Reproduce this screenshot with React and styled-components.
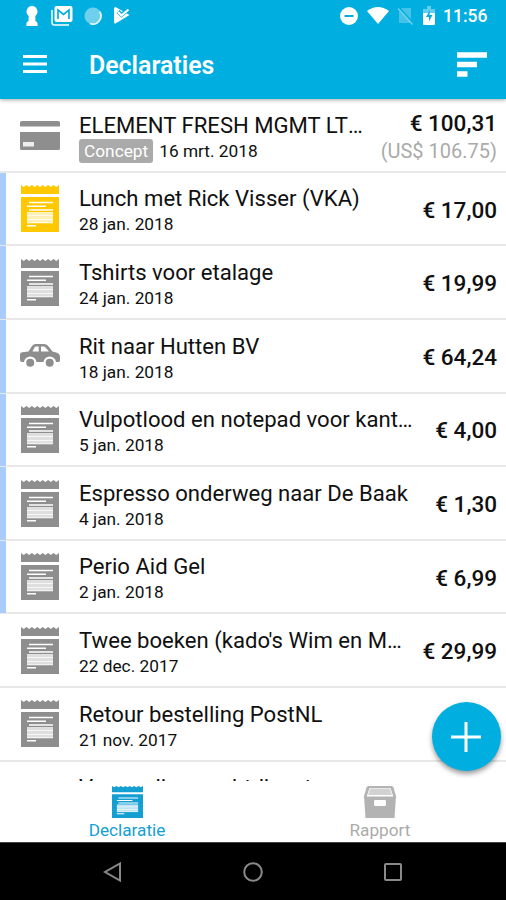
import React from 'react';
import styled, { createGlobalStyle } from 'styled-components';

const GlobalStyle = createGlobalStyle`
  * {
    box-sizing: border-box;
  }

  body {
    margin: 0;
    background: #fff;
    font-family: Roboto, sans-serif;
    color: #101010;
  }
`;

const Screen = styled.div`
  position: relative;
  display: flex;
  flex-direction: column;
  width: 506px;
  height: 900px;
  overflow: hidden;
  background: #fff;
`;

const Header = styled.header`
  flex: none;
  height: 99px;
  background: #00aee0;
  color: #fff;
  box-shadow: 0 1px 4px rgba(0, 0, 0, 0.35);
  z-index: 1;
`;

const StatusBar = styled.div`
  display: flex;
  align-items: center;
  justify-content: space-between;
  height: 31px;
  padding: 0 18px 0 25px;
`;

const StatusIcons = styled.div`
  display: flex;
  align-items: center;
  gap: ${(props) => props.$gap}px;
`;

const Clock = styled.span`
  width: 45px;
  font-size: 17.5px;
  font-weight: 500;
  line-height: 20px;
  white-space: nowrap;
`;

const Toolbar = styled.div`
  display: flex;
  align-items: center;
  height: 66px;
  padding: 0 19px 0 23px;
`;

const Title = styled.h1`
  flex: 1;
  margin: 3px 0 0 42px;
  font-size: 24.9px;
  font-weight: 600;
  line-height: 30px;
`;

const List = styled.ul`
  flex: 1;
  min-height: 0;
  margin: 0;
  padding: 0.3px 0 0;
  overflow: hidden;
  list-style: none;
`;

const Row = styled.li`
  display: flex;
  align-items: center;
  height: 73.6px;
  padding-right: 9px;
  border-bottom: 2px solid #e8e8e8;
`;

const Marker = styled.div`
  flex: none;
  align-self: stretch;
  width: 6px;
  margin-bottom: -1px;
  background: ${(props) => (props.$on ? '#a9ccfc' : 'transparent')};
`;

const IconCell = styled.div`
  display: flex;
  flex: none;
  justify-content: center;
  width: 67px;
  color: ${(props) => props.$color || '#8e8e8e'};
`;

const Details = styled.div`
  flex: 1;
  min-width: 0;
  padding: 3.4px 17px 0 6px;
`;

const Name = styled.div`
  overflow: hidden;
  font-size: 22.1px;
  line-height: 28px;
  text-overflow: ellipsis;
  white-space: nowrap;
`;

const Meta = styled.div`
  display: flex;
  align-items: center;
  height: 24px;
  gap: 6px;
  font-size: 17.3px;
  line-height: 24px;
`;

const Badge = styled.span`
  height: 24px;
  padding: 0 5px;
  border-radius: 3px;
  background: #aaa;
  color: #fff;
`;

const Amounts = styled.div`
  flex: none;
  padding-top: 2px;
  text-align: right;
  white-space: nowrap;
`;

const Amount = styled.div`
  font-size: 22.5px;
  font-weight: 500;
  line-height: 28px;
`;

const Foreign = styled.div`
  padding-top: 1px;
  font-size: 20px;
  line-height: 26px;
  color: #aaa;
`;

const AddButton = styled.button`
  position: absolute;
  top: 702px;
  left: 431.5px;
  display: flex;
  align-items: center;
  justify-content: center;
  width: 69px;
  height: 69px;
  padding: 0;
  border: 0;
  border-radius: 50%;
  background: #00aee0;
  box-shadow: 0 3px 5px rgba(0, 0, 0, 0.4);
`;

const Tabs = styled.nav`
  display: flex;
  flex: none;
  height: 61px;
  background: #fff;
`;

const Tab = styled.div`
  display: flex;
  flex: 1;
  flex-direction: column;
  align-items: center;
  padding: 5px 0 0 1px;
  font-size: 17.2px;
  line-height: 24px;
  color: ${(props) => (props.$active ? '#149fd3' : '#ababab')};
`;

const NavBar = styled.div`
  display: flex;
  flex: none;
  align-items: center;
  justify-content: center;
  gap: 120px;
  height: 58px;
  background: #000;
  border-top: 1px solid #444;
`;

const Receipt = ({ width = 38, height = 47 }) => (
  <svg width={width} height={height} viewBox="0 0 38 47" preserveAspectRatio="none">
    <path
      fill="currentColor"
      d="M0 0l2.7 2 2.7-2 2.7 2 2.8-2 2.7 2L16.3 0 19 2l2.7-2 2.7 2 2.7-2 2.8 2 2.7-2 2.7 2L38 0v9H0zM0 12h38v35H0z"
    />
    <path
      stroke="#fff"
      strokeWidth="1.5"
      d="M8 17.5h24M6 21.2h19M8 25h24M6 40.7h9"
    />
    <path fill="#fff" fillOpacity="0.72" d="M6 27h26v11.2H6z" />
    <path stroke="#fff" strokeOpacity="0.7" d="M6 30.5h26M6 34.5h26M6 37.7h26" />
  </svg>
);

const CreditCard = () => (
  <svg width="40" height="30" viewBox="0 0 40 30">
    <path fill="currentColor" d="M0 6.5V2.500Q0 1 2 1h36q2 0 2 1.500v4zM0 12h40v16.500q0 1.500-1.500 1.500h-37Q0 30 0 28.500z" />
    <path fill="#fff" fillOpacity="0.85" d="M3 22h11v4.500H3z" />
  </svg>
);

const Car = () => (
  <svg width="40" height="24" viewBox="0 0 40 24">
    <path
      fill="currentColor"
      fillRule="evenodd"
      d="M0 10.500q0-2 2-2.300L8.500 7.500l3.700-5.700Q13.500 0 15.500 0h8.500q2.500 0 4 1.800L32.500 7.500l4.500 1.300Q40 10 40 13v3.500q0 1.500-2 1.500h-2a6.300 6.300 0 0 0-12.500 0h-7a6.300 6.300 0 0 0-12.500 0H2q-2 0-2-2zM12.500 7.500h6.200V2.500h-2.700q-1 0-1.500 1zM21 7.500h8l-3.500-4q-.8-1-2-1H21z"
    />
    <circle cx="10.200" cy="18.700" r="4" fill="currentColor" />
    <circle cx="29.700" cy="18.700" r="4" fill="currentColor" />
  </svg>
);

const ReportBox = () => (
  <svg width="32" height="32" viewBox="0 0 32 32">
    <path fill="#b3b3b3" d="M4.500 0h23q1.500 0 2 1.500L32 10l-1.500 22h-29L0 10l2.500-8.500Q3 0 4.500 0z" />
    <path fill="#fff" d="M5.500 2h21l2.800 8.500H2.700z" />
    <path fill="#d2d2d2" d="M6 2.500h20l2 6.500H4z" />
    <rect x="10" y="14" width="12" height="6" rx="1.200" fill="#fff" />
  </svg>
);

const Keyhole = () => (
  <svg width="14" height="20" viewBox="0 0 14 20" fill="#fff">
    <path d="M7 0a5.500 5.500 0 0 0-4.200 9l.9 1L3.500 15l-1.300 1q-.8.500-.8 1.500V20h11.200v-2.500q0-1-.8-1.500l-1.300-1-.2-5 .9-1A5.500 5.500 0 0 0 7 0z" />
  </svg>
);

const MailStack = () => (
  <svg width="22" height="20" viewBox="0 0 22 20" fill="none">
    <path d="M1 4v12.500Q1 19 3.500 19H18" stroke="#fff" strokeWidth="1.500" />
    <rect x="3.500" y="0" width="18" height="16" rx="2" fill="#fff" />
    <path d="M7 13V4l5.500 4.500L18 4v9" stroke="#00aee0" strokeWidth="1.700" />
  </svg>
);

const SyncDot = () => (
  <svg width="18" height="18" viewBox="0 0 18 18">
    <circle cx="9" cy="9" r="8.500" fill="#6ed0ec" />
    <path d="M15.500 4.500A8 8 0 0 1 6 16.500" fill="none" stroke="#e2f6fc" strokeWidth="1.700" />
  </svg>
);

const PlayCheck = () => (
  <svg width="16" height="17" viewBox="0 0 16 17">
    <path d="M1.500 0L15.500 8 1.500 16.500Q0 17 0 15V1.500Q0 0 1.500 0z" fill="#fff" />
    <path d="M4 4.500L7.500 8 14.500 2" fill="none" stroke="#00aee0" strokeWidth="4" />
    <path d="M4 5L7.500 8.500 14.500 2.500" fill="none" stroke="#fff" strokeWidth="2.300" />
  </svg>
);

const DoNotDisturb = () => (
  <svg width="18" height="18" viewBox="0 0 18 18">
    <circle cx="9" cy="9" r="9" fill="#fff" />
    <path d="M4.500 9h9" stroke="#00aee0" strokeWidth="2" />
  </svg>
);

const Wifi = () => (
  <svg width="22" height="17" viewBox="0 0 22 17">
    <path d="M0 4Q11-4 22 4L11 17z" fill="#fff" />
  </svg>
);

const NoSim = () => (
  <svg width="17" height="18" viewBox="0 0 17 18">
    <path d="M5 1h9v15H2V4z" fill="#45c2e7" />
    <path d="M2 .5l14 15" stroke="#00aee0" strokeWidth="1.500" />
    <path d="M1 1.500l14.500 16" stroke="#72d1ed" strokeWidth="1.300" />
  </svg>
);

const Battery = () => (
  <svg width="12" height="19" viewBox="0 0 12 19">
    <path d="M0 3h4V0h4v3h4v15.500H0z" fill="#65cdec" />
    <path d="M0 7h12v10.500q0 1.500-1.500 1.500h-9Q0 19 0 17.500z" fill="#fff" />
    <path d="M7 4L3 11h3v4.500L9.500 9H6.500z" fill="#00aee0" />
  </svg>
);

const expenses = [
  { name: 'ELEMENT FRESH MGMT LTD SHANGHAI', date: '16 mrt. 2018', amount: '100,31', foreign: '(US$ 106.75)', concept: true, icon: CreditCard },
  { name: 'Lunch met Rick Visser (VKA)', date: '28 jan. 2018', amount: '17,00', marked: true, color: '#ffc800' },
  { name: 'Tshirts voor etalage', date: '24 jan. 2018', amount: '19,99', marked: true },
  { name: 'Rit naar Hutten BV', date: '18 jan. 2018', amount: '64,24', marked: true, icon: Car },
  { name: 'Vulpotlood en notepad voor kantoor', date: '5 jan. 2018', amount: '4,00', marked: true },
  { name: 'Espresso onderweg naar De Baak', date: '4 jan. 2018', amount: '1,30', marked: true },
  { name: 'Perio Aid Gel', date: '2 jan. 2018', amount: '6,99', marked: true },
  { name: "Twee boeken (kado's Wim en Marieke)", date: '22 dec. 2017', amount: '29,99' },
  { name: 'Retour bestelling PostNL', date: '21 nov. 2017' },
  { name: 'Vergoeding nachtdienst', date: '20 nov. 2017', icon: Car },
];

const ExpenseRow = ({ expense }) => {
  const Icon = expense.icon || Receipt;
  return (
    <Row>
      <Marker $on={expense.marked} />
      <IconCell $color={expense.color}>
        <Icon />
      </IconCell>
      <Details>
        <Name>{expense.name}</Name>
        <Meta>
          {expense.concept && <Badge>Concept</Badge>}
          <span>{expense.date}</span>
        </Meta>
      </Details>
      {expense.amount && (
        <Amounts>
          <Amount>€ {expense.amount}</Amount>
          {expense.foreign && <Foreign>{expense.foreign}</Foreign>}
        </Amounts>
      )}
    </Row>
  );
};

const App = () => {
  return (
    <>
      <GlobalStyle />
      <Screen>
        <Header>
          <StatusBar>
            <StatusIcons $gap={11.5}>
              <Keyhole />
              <MailStack />
              <SyncDot />
              <PlayCheck />
            </StatusIcons>
            <StatusIcons $gap={8.5}>
              <DoNotDisturb />
              <Wifi />
              <NoSim />
              <Battery />
              <Clock>11:56</Clock>
            </StatusIcons>
          </StatusBar>
          <Toolbar>
            <svg width="24" height="18" viewBox="0 0 24 18">
              <path d="M0 1.500h24M0 9h24M0 16.500h24" stroke="#fff" strokeWidth="2.800" />
            </svg>
            <Title>Declaraties</Title>
            <svg width="30" height="25" viewBox="0 0 30 25">
              <path d="M0 3h30M0 12.500h20M0 22h10.500" stroke="#fff" strokeWidth="5.500" />
            </svg>
          </Toolbar>
        </Header>
        <List>
          {expenses.map((expense) => (
            <ExpenseRow key={expense.name} expense={expense} />
          ))}
        </List>
        <Tabs>
          <Tab $active>
            <Receipt width={31} height={32} />
            Declaratie
          </Tab>
          <Tab>
            <ReportBox />
            Rapport
          </Tab>
        </Tabs>
        <NavBar>
          <svg width="20" height="20" viewBox="0 0 20 20">
            <path d="M17 1.500v17L2 10z" fill="none" stroke="#8a8a8a" strokeWidth="2" />
          </svg>
          <svg width="20" height="20" viewBox="0 0 20 20">
            <circle cx="10" cy="10" r="8.800" fill="none" stroke="#8a8a8a" strokeWidth="2" />
          </svg>
          <svg width="20" height="20" viewBox="0 0 20 20">
            <rect x="2" y="2" width="16" height="16" rx="1" fill="none" stroke="#8a8a8a" strokeWidth="2" />
          </svg>
        </NavBar>
        <AddButton aria-label="Toevoegen">
          <svg width="30" height="30" viewBox="0 0 30 30">
            <path d="M15 0v30M0 15h30" stroke="#fff" strokeWidth="3" />
          </svg>
        </AddButton>
      </Screen>
    </>
  );
};

export default App;
